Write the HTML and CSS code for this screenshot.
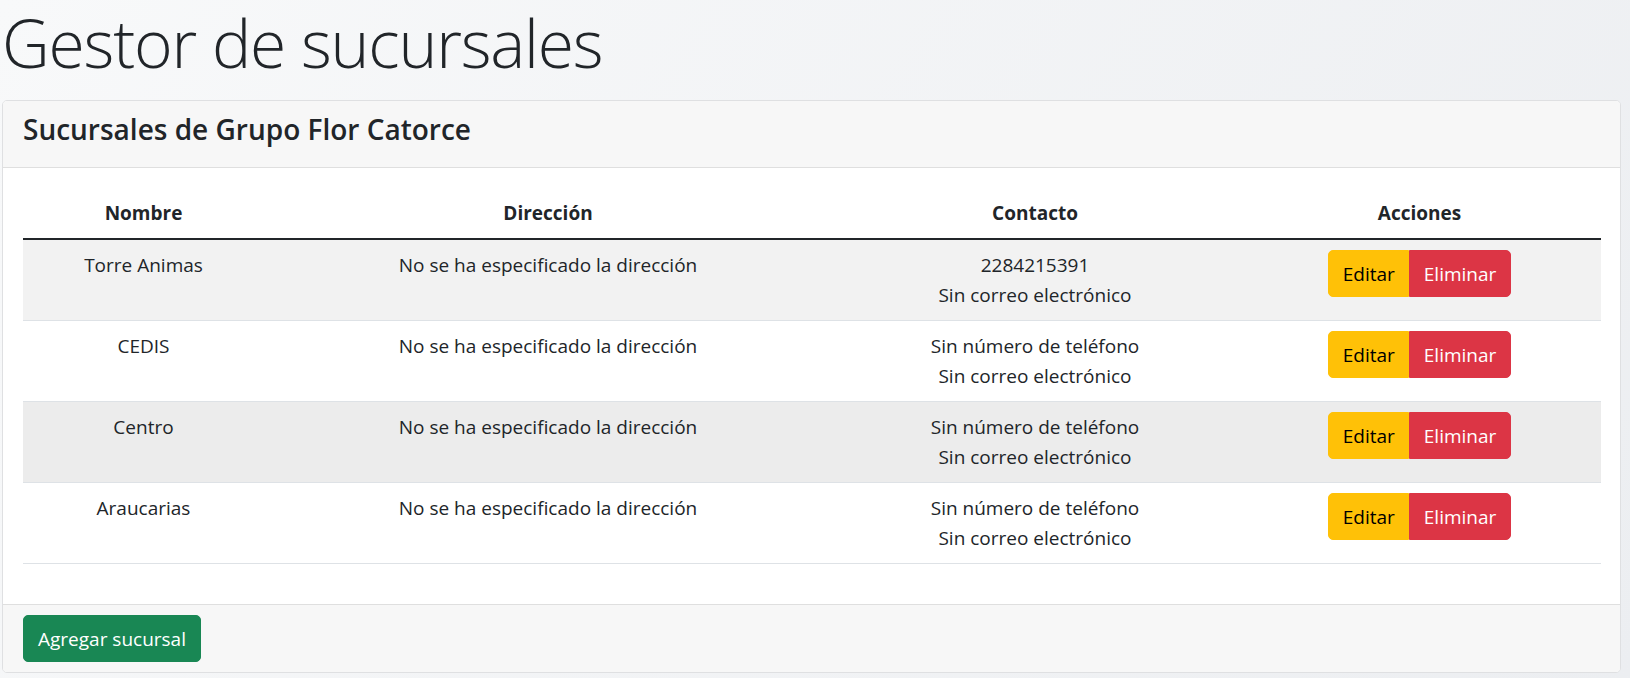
FILE: index.html
```html
<!DOCTYPE html>
<html lang="es">
<head>
<meta charset="utf-8">
<title>Gestor de sucursales</title>
<link rel="stylesheet" href="styles.css">
</head>
<body>
<div class="page">
  <h1 class="title">Gestor de sucursales</h1>
  <div class="card">
    <div class="card-header">
      <h4 class="card-title">Sucursales de Grupo Flor Catorce</h4>
    </div>
    <div class="card-body">
      <table class="table">
        <colgroup>
          <col class="col-nombre">
          <col class="col-direccion">
          <col class="col-contacto">
          <col class="col-acciones">
        </colgroup>
        <thead>
          <tr>
            <th>Nombre</th>
            <th>Dirección</th>
            <th>Contacto</th>
            <th>Acciones</th>
          </tr>
        </thead>
        <tbody>
          <tr class="row-striped">
            <td>Torre Animas</td>
            <td>No se ha especificado la dirección</td>
            <td><div>2284215391</div><div>Sin correo electrónico</div></td>
            <td><div class="btn-group"><button class="btn btn-warning">Editar</button><button class="btn btn-danger">Eliminar</button></div></td>
          </tr>
          <tr>
            <td>CEDIS</td>
            <td>No se ha especificado la dirección</td>
            <td><div>Sin número de teléfono</div><div>Sin correo electrónico</div></td>
            <td><div class="btn-group"><button class="btn btn-warning">Editar</button><button class="btn btn-danger">Eliminar</button></div></td>
          </tr>
          <tr class="row-hover">
            <td>Centro</td>
            <td>No se ha especificado la dirección</td>
            <td><div>Sin número de teléfono</div><div>Sin correo electrónico</div></td>
            <td><div class="btn-group"><button class="btn btn-warning">Editar</button><button class="btn btn-danger">Eliminar</button></div></td>
          </tr>
          <tr>
            <td>Araucarias</td>
            <td>No se ha especificado la dirección</td>
            <td><div>Sin número de teléfono</div><div>Sin correo electrónico</div></td>
            <td><div class="btn-group"><button class="btn btn-warning">Editar</button><button class="btn btn-danger">Eliminar</button></div></td>
          </tr>
        </tbody>
      </table>
    </div>
    <div class="card-footer">
      <button class="btn btn-success">Agregar sucursal</button>
    </div>
  </div>
</div>
</body>
</html>
```

FILE: styles.css
```css
html, body {
  margin: 0;
  padding: 0;
}
body {
  font-family: "Open Sans", "Noto Sans", "DejaVu Sans", sans-serif;
  font-size: 19px;
  line-height: 30px;
  color: #212529;
  background: linear-gradient(120deg, #f8f9fa 0%, #eceef1 100%);
  min-height: 678px;
}
.page {
  padding: 0 9px 0 2px;
}
.title {
  font-size: 66px;
  font-weight: 300;
  line-height: 84px;
  margin: 0 0 16px 0;
  letter-spacing: -1.2px;
}
.card {
  background: #fff;
  border: 1px solid #dfe0e2;
  border-radius: 5px;
  overflow: hidden;
}
.card-header {
  background: #f7f7f7;
  border-bottom: 1px solid #dfdfdf;
  padding: 10px 20px;
}
.card-title {
  margin: 0 0 10px 0;
  font-size: 28px;
  line-height: 36px;
  font-weight: 600;
  letter-spacing: 0;
}
.card-body {
  padding: 20px;
}
.table {
  width: 100%;
  table-layout: fixed;
  border-collapse: collapse;
  margin-bottom: 20px;
}
.col-nombre { width: 241px; }
.col-direccion { width: 568px; }
.col-contacto { width: 406px; }
.col-acciones { width: 363px; }
.table th,
.table td {
  padding: 10px;
  text-align: center;
  vertical-align: top;
  border-bottom: 1px solid #dee2e6;
}
.table th {
  font-weight: 700;
  border-bottom: 2px solid #212529;
}
.row-striped td {
  background: #f2f2f2;
}
.row-hover td {
  background: #ececec;
}
.btn {
  font-family: inherit;
  font-size: 19px;
  line-height: 30px;
  padding: 7.5px 13.5px;
  border: 1px solid transparent;
  border-radius: 5px;
  cursor: pointer;
  margin: 0;
}
.btn-group {
  display: inline-flex;
}
.btn-group .btn:first-child {
  border-top-right-radius: 0;
  border-bottom-right-radius: 0;
}
.btn-group .btn:last-child {
  border-top-left-radius: 0;
  border-bottom-left-radius: 0;
}
.btn-warning {
  background: #ffc107;
  border-color: #ffc107;
  color: #000;
}
.btn-danger {
  background: #dc3545;
  border-color: #dc3545;
  color: #fff;
}
.btn-success {
  background: #198754;
  border-color: #198754;
  color: #fff;
  padding: 7.5px 14px;
}
.card-footer {
  background: #f7f7f7;
  border-top: 1px solid #dfdfdf;
  padding: 10px 20px;
}
```
